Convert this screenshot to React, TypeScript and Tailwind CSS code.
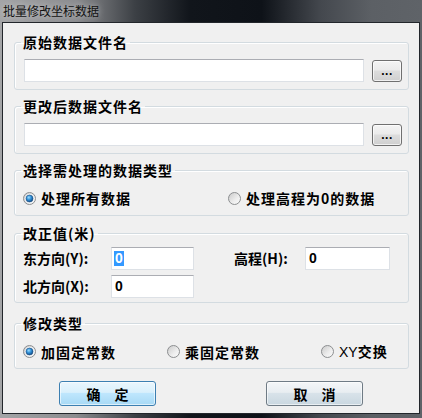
import React from "react";

const cjk = "font-['Noto_Sans_CJK_SC','Noto_Sans',sans-serif]";

function Radio({ checked = false }: { checked?: boolean }) {
  return (
    <svg width="13" height="13" viewBox="0 0 13 13" className="shrink-0">
      <defs>
        <linearGradient id="radio-bg" x1="0" y1="0" x2="1" y2="1">
          <stop offset="0" stopColor="#c9c9c9" />
          <stop offset="0.6" stopColor="#eeeeee" />
          <stop offset="1" stopColor="#fbfbfb" />
        </linearGradient>
        <radialGradient id="radio-dot" cx="0.4" cy="0.35" r="0.75">
          <stop offset="0" stopColor="#9bdcff" />
          <stop offset="0.45" stopColor="#2f8fd6" />
          <stop offset="1" stopColor="#0b3b72" />
        </radialGradient>
      </defs>
      <circle cx="6.5" cy="6.5" r="6" fill="url(#radio-bg)" stroke="#8c8e90" />
      {checked && (
        <>
          <circle cx="6.5" cy="6.5" r="4.4" fill="#f4f8fb" />
          <circle cx="6.5" cy="6.5" r="3.5" fill="url(#radio-dot)" stroke="#1a4c80" strokeWidth="0.6" />
        </>
      )}
    </svg>
  );
}

function Option({ label, checked, className = "" }: { label: React.ReactNode; checked?: boolean; className?: string }) {
  return (
    <div className={`flex items-center gap-[5px] ${className}`}>
      <Radio checked={checked} />
      <span className="text-[14px] leading-[20px] font-bold tracking-[1px] text-black">{label}</span>
    </div>
  );
}

function Group({ title, className = "", children }: { title: string; className?: string; children: React.ReactNode }) {
  return (
    <fieldset className={`ml-[11px] mr-[10px] rounded-[3px] border border-[#d3dbe0] shadow-[inset_1px_1px_0_#fff] ${className}`}>
      <legend className="ml-[6px] px-[2px] text-[14px] leading-[17px] font-bold tracking-[1px] text-black">{title}</legend>
      {children}
    </fieldset>
  );
}

function Field({ width, selected = false }: { width: string; selected?: boolean }) {
  return (
    <div className={`h-[23px] ${width} flex items-center border border-[#dde1e6] border-t-[#abadb3] bg-white pl-[2px] font-['Liberation_Sans',sans-serif] text-[14px] font-bold`}>
      {selected ? (
        <span className="bg-[#3399ff] px-[1px] leading-[15px] text-white">0</span>
      ) : (
        <span className="px-[1px] leading-[15px] text-black">0</span>
      )}
    </div>
  );
}

function BrowseButton() {
  return (
    <button className="h-[22px] w-[30px] rounded-[3px] border border-[#707070] bg-[linear-gradient(180deg,#f4f4f4_0%,#ebebeb_45%,#dddddd_50%,#cfcfcf_100%)] shadow-[inset_0_0_0_1px_rgba(255,255,255,0.7)] font-['Liberation_Sans',sans-serif] text-[12px] font-bold leading-[12px] tracking-[0.5px] text-black">
      ...
    </button>
  );
}

export default function App() {
  return (
    <div
      className={`flex h-[418px] w-[422px] flex-col overflow-hidden bg-[linear-gradient(90deg,#a4a5a7_0%,#8b8c8f_18%,#3c4045_32%,#11151b_45%,#0e1218_62%,#44484e_76%,#5c6065_88%,#5f6368_100%)] ${cjk}`}
    >
      <div className="flex h-[22px] items-center pl-[3px] text-[12px] leading-[14px] text-[#111] [text-shadow:0_0_6px_rgba(255,255,255,0.6)]">
        批量修改坐标数据
      </div>
      <div className="mx-[2px] mb-[4px] flex flex-1 flex-col border border-[#22262b] bg-[#f0f0f0]">
        <Group title="原始数据文件名" className="mt-[11px]">
          <div className="flex items-center gap-[8px] pt-[8px] pb-[7px] pl-[9px] pr-[6px]">
            <div className="h-[23px] flex-1 border border-[#dde1e6] border-t-[#abadb3] bg-white" />
            <BrowseButton />
          </div>
        </Group>

        <Group title="更改后数据文件名" className="mt-[8px]">
          <div className="flex items-center gap-[8px] pt-[8px] pb-[7px] pl-[9px] pr-[6px]">
            <div className="h-[23px] flex-1 border border-[#dde1e6] border-t-[#abadb3] bg-white" />
            <BrowseButton />
          </div>
        </Group>

        <Group title="选择需处理的数据类型" className="mt-[8px]">
          <div className="flex items-center pt-[9px] pb-[7px] pl-[8px]">
            <Option label="处理所有数据" checked className="w-[205px]" />
            <Option label="处理高程为0的数据" />
          </div>
        </Group>

        <Group title="改正值(米)" className="mt-[9px]">
          <div className="flex flex-col gap-[5px] pt-[5px] pb-[4px] pl-[8px] text-[14px] font-semibold text-black">
            <div className="flex items-center">
              <span className="w-[88px]">东方向(Y):</span>
              <Field width="w-[83px]" selected />
              <span className="ml-[40px] w-[71px]">高程(H):</span>
              <Field width="w-[85px]" />
            </div>
            <div className="flex items-center">
              <span className="w-[88px]">北方向(X):</span>
              <Field width="w-[83px]" />
            </div>
          </div>
        </Group>

        <Group title="修改类型" className="mt-[12px]">
          <div className="flex items-center pt-[9px] pb-[6px] pl-[8px]">
            <Option label="加固定常数" checked className="w-[144px]" />
            <Option label="乘固定常数" className="w-[154px]" />
            <Option
              label={
                <>
                  <span className="font-['Liberation_Sans',sans-serif] font-normal tracking-normal">XY</span>交换
                </>
              }
            />
          </div>
        </Group>

        <div className="mt-[12px] flex">
          <button className="ml-[56px] h-[25px] w-[97px] rounded-[3px] border border-[#3c7fb1] bg-[linear-gradient(180deg,#eaf6fd_0%,#d9f0fc_45%,#bee6fd_50%,#a7d9f5_100%)] shadow-[inset_0_0_0_1px_rgba(255,255,255,0.6)] text-[14px] font-bold leading-[16px] text-black">
            确　定
          </button>
          <button className="ml-[110px] h-[25px] w-[97px] rounded-[3px] border border-[#6f7b85] bg-[linear-gradient(180deg,#f4f6f8_0%,#e8edf1_45%,#d8e2e9_50%,#c9d7e0_100%)] shadow-[inset_0_0_0_1px_rgba(255,255,255,0.6)] text-[14px] font-bold leading-[16px] text-black">
            取　消
          </button>
        </div>
      </div>
    </div>
  );
}
